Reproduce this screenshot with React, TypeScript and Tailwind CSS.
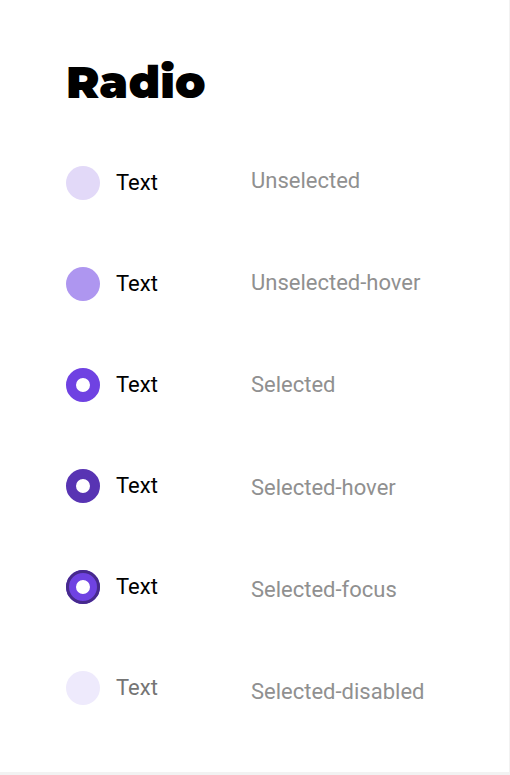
const radioBase = "m-0 size-[34px] shrink-0 appearance-none rounded-full";
const selected = "border-[10px] bg-white";

const states = [
  { id: "unselected", name: "Unselected", checked: false, disabled: false, style: "bg-[#e2d9f8]" },
  { id: "unselected-hover", name: "Unselected-hover", checked: false, disabled: false, style: "bg-[#ae96f0]" },
  { id: "selected", name: "Selected", checked: true, disabled: false, style: `${selected} border-[#6f42e2]` },
  { id: "selected-hover", name: "Selected-hover", checked: true, disabled: false, style: `${selected} border-[#5834b3]` },
  {
    id: "selected-focus",
    name: "Selected-focus",
    checked: true,
    disabled: false,
    style: `${selected} border-[#6f42e2] outline-[3px] -outline-offset-3 outline-[#472a8c]`,
  },
  { id: "selected-disabled", name: "Selected-disabled", checked: false, disabled: true, style: "bg-[#eeeafc]" },
];

export default function App() {
  return (
    <main className="min-h-screen border-r border-b-[3px] border-[#f2f2f2] bg-white px-[66px] pt-14 pb-14 font-['Roboto',sans-serif] text-[22px] leading-[34px] text-black antialiased">
      <h1 className="font-['Montserrat','Inter',sans-serif] text-[45px] leading-[52px] font-black">Radio</h1>
      <div className="mt-14 flex">
        <div className="flex w-[185px] shrink-0 flex-col gap-[67px] pt-[2px] pb-1">
          {states.map((s) => (
            <div key={s.id} className="flex items-center gap-4">
              <input
                type="radio"
                id={s.id}
                name={s.id}
                defaultChecked={s.checked}
                disabled={s.disabled}
                aria-describedby={`${s.id}-state`}
                className={`${radioBase} ${s.style}`}
              />
              <label htmlFor={s.id} className={s.disabled ? "text-[#757575]" : "text-black"}>
                Text
              </label>
            </div>
          ))}
        </div>
        <div className="flex flex-col justify-between whitespace-nowrap text-[#909090]">
          {states.map((s) => (
            <p key={s.id} id={`${s.id}-state`}>
              {s.name}
            </p>
          ))}
        </div>
      </div>
    </main>
  );
}
